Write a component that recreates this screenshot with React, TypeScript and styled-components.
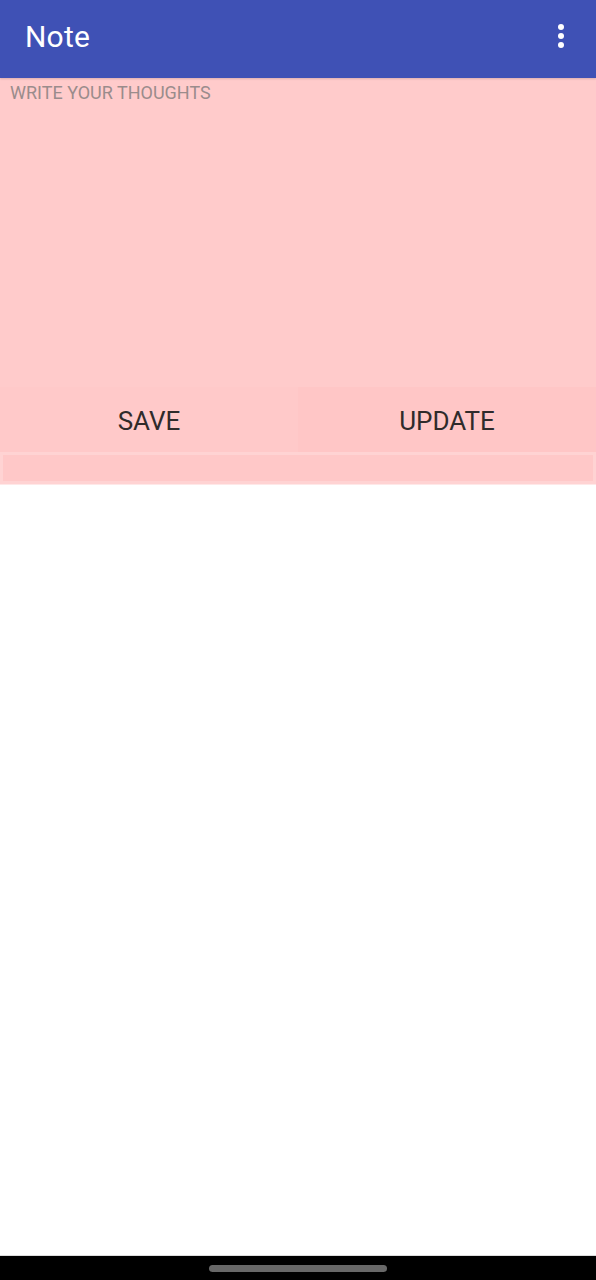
import styled, { createGlobalStyle } from "styled-components";

const Global = createGlobalStyle`
  html, body {
    margin: 0;
    padding: 0;
    background: #ffffff;
  }
  #root {
    height: 1280px;
  }
`;

const Screen = styled.div`
  width: 596px;
  height: 1280px;
  display: flex;
  flex-direction: column;
  font-family: Roboto, "Open Sans", sans-serif;
  background: #ffffff;
`;

const AppBar = styled.header`
  height: 78px;
  flex-shrink: 0;
  background: #3f51b5;
  display: flex;
  align-items: center;
  justify-content: space-between;
  padding: 0 25px;
  box-sizing: border-box;
  box-shadow: 0 1px 2px rgba(0, 0, 0, 0.15);
  position: relative;
  z-index: 1;
`;

const Title = styled.h1`
  margin: 0 0 6px 0;
  color: #ffffff;
  font-size: 30px;
  font-weight: 400;
  letter-spacing: 0.2px;
`;

const MenuDots = styled.div`
  display: flex;
  flex-direction: column;
  gap: 3px;
  margin: 0 7px 6px 0;
  span {
    width: 6px;
    height: 6px;
    border-radius: 50%;
    background: #ffffff;
  }
`;

const Editor = styled.textarea`
  height: 309px;
  flex-shrink: 0;
  border: none;
  outline: none;
  resize: none;
  margin: 0;
  padding: 4px 10px;
  box-sizing: border-box;
  background: #ffcbcb;
  font-family: inherit;
  font-size: 18px;
  color: #333;
  &::placeholder {
    color: #9a8c8c;
  }
`;

const ButtonRow = styled.div`
  height: 65px;
  flex-shrink: 0;
  display: grid;
  grid-template-columns: 1fr 1fr;
`;

const ActionButton = styled.button<{ $tone: string }>`
  border: none;
  margin: 0;
  padding: 2px 0 0 0;
  background: ${(p) => p.$tone};
  font-family: inherit;
  font-size: 26px;
  font-weight: 400;
  color: #2f2b2b;
  cursor: pointer;
`;

const ListStrip = styled.div`
  height: 33px;
  flex-shrink: 0;
  box-sizing: border-box;
  background: #ffd3d3;
  padding: 3px;
  border-bottom: 1px solid #ffe8e8;
`;

const ListInner = styled.div`
  height: 100%;
  background: #ffc8c8;
`;

const Spacer = styled.div`
  flex: 1;
  background: #ffffff;
  border-bottom: 1px solid #dcdcdc;
`;

const NavBar = styled.div`
  height: 24px;
  flex-shrink: 0;
  background: #000000;
  display: flex;
  align-items: center;
  justify-content: center;
`;

const Handle = styled.div`
  width: 178px;
  height: 7px;
  border-radius: 4px;
  background: #686868;
`;

export default function App() {
  return (
    <>
      <Global />
      <Screen>
        <AppBar>
          <Title>Note</Title>
          <MenuDots>
            <span />
            <span />
            <span />
          </MenuDots>
        </AppBar>
        <Editor placeholder="WRITE YOUR THOUGHTS" />
        <ButtonRow>
          <ActionButton $tone="#ffc9c9">SAVE</ActionButton>
          <ActionButton $tone="#ffc6c6">UPDATE</ActionButton>
        </ButtonRow>
        <ListStrip>
          <ListInner />
        </ListStrip>
        <Spacer />
        <NavBar>
          <Handle />
        </NavBar>
      </Screen>
    </>
  );
}
